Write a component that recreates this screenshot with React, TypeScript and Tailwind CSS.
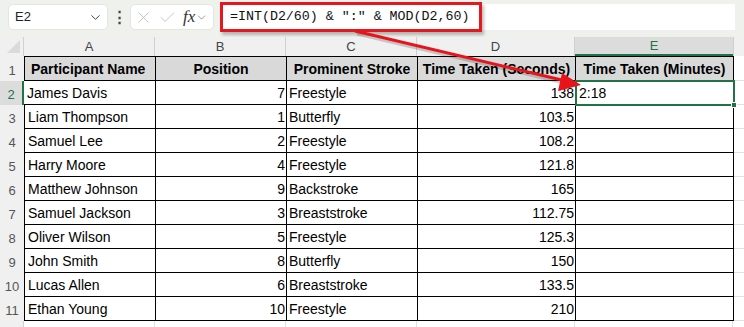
import { ChevronDown, X, Check } from "lucide-react";

const rows: [string, number, string, string][] = [
  ["James Davis", 7, "Freestyle", "138"],
  ["Liam Thompson", 1, "Butterfly", "103.5"],
  ["Samuel Lee", 2, "Freestyle", "108.2"],
  ["Harry Moore", 4, "Freestyle", "121.8"],
  ["Matthew Johnson", 9, "Backstroke", "165"],
  ["Samuel Jackson", 3, "Breaststroke", "112.75"],
  ["Oliver Wilson", 5, "Freestyle", "125.3"],
  ["John Smith", 8, "Butterfly", "150"],
  ["Lucas Allen", 6, "Breaststroke", "133.5"],
  ["Ethan Young", 10, "Freestyle", "210"],
];

const cellFont = { fontFamily: '"Liberation Sans", Arial, sans-serif' };

export default function App() {
  return (
    <div className="relative w-[744px] h-[327px] overflow-hidden bg-white" style={cellFont}>
      {/* barra de fórmulas */}
      <div className="h-[37px] bg-[#eef1ec] flex items-start pt-[4px] pl-[8px]">
        <div className="w-[100px] h-[26px] bg-white rounded-[5px] border border-[#e3e6e1] flex items-center justify-between pl-[6px] pr-[4px] text-[13px] text-[#222]">
          <span>E2</span>
          <ChevronDown size={15} strokeWidth={1.6} className="text-[#444]" />
        </div>
        <div className="w-[22px] h-[26px] flex items-center justify-center text-[#444] text-[15px] font-bold">⋮</div>
        <div className="w-[84px] h-[26px] bg-white rounded-[5px] border border-[#e3e6e1] flex items-center pl-[3px] pr-[2px] gap-[5px] text-[#bdbdbd]">
          <X size={19} strokeWidth={1.1} />
          <Check size={19} strokeWidth={1.1} />
          <span className="text-[#333] italic text-[17px] ml-[1px]" style={{ fontFamily: '"Liberation Serif", serif' }}>fx</span>
          <ChevronDown size={13} strokeWidth={1.4} className="text-[#777] -ml-[5px]" />
        </div>
        <div className="ml-[6px] w-[515px] h-[26px] bg-white rounded-l-[4px] flex items-center">
          <div className="h-[30px] -mt-[1px] w-[262px] border-[3px] border-[#e5171f] shadow-[2px_3px_3px_rgba(0,0,0,0.25)] flex items-center pl-[7px] text-[13.3px] text-[#111]" style={{ fontFamily: '"Liberation Mono", "Courier New", monospace' }}>
            =INT(D2/60) &amp; ":" &amp; MOD(D2,60)
          </div>
        </div>
      </div>

      {/* encabezados de columna */}
      <div className="flex h-[19px] bg-[#eef1ec] text-[13px] text-[#444]">
        <div className="w-[24px] relative bg-[#f0f0f0] border-r border-[#d0d0d0]">
          <div className="absolute right-[3px] bottom-[3px] w-0 h-0 border-l-[13px] border-l-transparent border-b-[13px] border-b-[#dadada]" />
        </div>
        <div className="w-[131px] bg-[#f0f0f0] border-r border-[#d0d0d0] flex items-center justify-center pt-[1px]">A</div>
        <div className="w-[131px] bg-[#f0f0f0] border-r border-[#d0d0d0] flex items-center justify-center pt-[1px]">B</div>
        <div className="w-[131px] bg-[#f0f0f0] border-r border-[#d0d0d0] flex items-center justify-center pt-[1px]">C</div>
        <div className="w-[158px] bg-[#f0f0f0] border-r border-[#d0d0d0] flex items-center justify-center pt-[1px]">D</div>
        <div className="w-[158px] bg-[#dcdcdc] border-b-2 border-[#217346] flex items-center justify-center pt-[1px] text-[#217346]">E</div>
        <div className="flex-1 bg-[#f0f0f0] border-l border-[#d0d0d0]" />
      </div>

      {/* fila 1 */}
      <div className="flex h-[25px] text-[14px] font-bold text-black">
        <div className="w-[24px] bg-[#f0f0f0] flex items-end justify-center pb-[1px] text-[13px] font-normal text-[#555]">1</div>
        <div className="w-[132px] bg-[#d9d9d9] border border-black flex items-end pl-[6px]">Participant Name</div>
        <div className="w-[131px] bg-[#d9d9d9] border-y border-r border-black flex items-end justify-center">Position</div>
        <div className="w-[131px] bg-[#d9d9d9] border-y border-r border-black flex items-end justify-center">Prominent Stroke</div>
        <div className="w-[158px] bg-[#d9d9d9] border-y border-r border-black flex items-end justify-center">Time Taken (Seconds)</div>
        <div className="w-[158px] bg-[#d9d9d9] border-y border-r border-black flex items-end justify-center">Time Taken (Minutes)</div>
        <div className="flex-1 border-b border-[#e1e1e1]" />
      </div>

      {/* datos */}
      {rows.map(([name, pos, stroke, secs], i) => (
        <div key={i} className="flex h-[24px] text-[14px] text-black">
          <div
            className={`w-[24px] flex items-end justify-center pb-[1px] text-[13px] ${
              i === 0 ? "bg-[#dcdcdc] text-[#217346] border-r-2 border-[#217346]" : "bg-[#f0f0f0] text-[#555]"
            }`}
          >
            {i + 2}
          </div>
          <div className={`w-[132px] ${i === 0 ? "" : "border-l"} border-b border-r border-black flex items-end pl-[3px]`}>{name}</div>
          <div className="w-[131px] border-b border-r border-black flex items-end justify-end pr-[1px]">{pos}</div>
          <div className="w-[131px] border-b border-r border-black flex items-end pl-[2px]">{stroke}</div>
          <div className="w-[158px] border-b border-r border-black flex items-end justify-end pr-[1px]">{secs}</div>
          <div className="w-[158px] border-b border-r border-black flex items-end pl-[3px]">{i === 0 ? "2:18" : ""}</div>
          <div className="flex-1 border-b border-[#e1e1e1]" />
        </div>
      ))}

      {/* fila 12 */}
      <div className="flex h-[24px]">
        <div className="w-[24px] bg-[#f0f0f0] border-r border-[#d0d0d0]" />
        <div className="w-[131px] border-r border-[#e1e1e1]" />
        <div className="w-[131px] border-r border-[#e1e1e1]" />
        <div className="w-[131px] border-r border-[#e1e1e1]" />
        <div className="w-[158px] border-r border-[#e1e1e1]" />
        <div className="w-[158px] border-r border-[#e1e1e1]" />
      </div>

      {/* celda seleccionada E2 */}
      <div className="absolute left-[575px] top-[80px] w-[160px] h-[26px] border-2 border-[#217346] pointer-events-none" />
      <div className="absolute left-[731px] top-[102px] w-[6px] h-[6px] bg-[#217346] border border-white" />

      {/* flecha */}
      <svg className="absolute left-0 top-0 pointer-events-none" width="744" height="327">
        <line x1="357" y1="34" x2="568" y2="84" stroke="rgba(0,0,0,0.18)" strokeWidth="3" />
        <line x1="355" y1="31" x2="566" y2="81" stroke="#e8141c" strokeWidth="3" />
        <polygon points="581,85 562,73 558,91" fill="#e8141c" />
      </svg>
    </div>
  );
}
